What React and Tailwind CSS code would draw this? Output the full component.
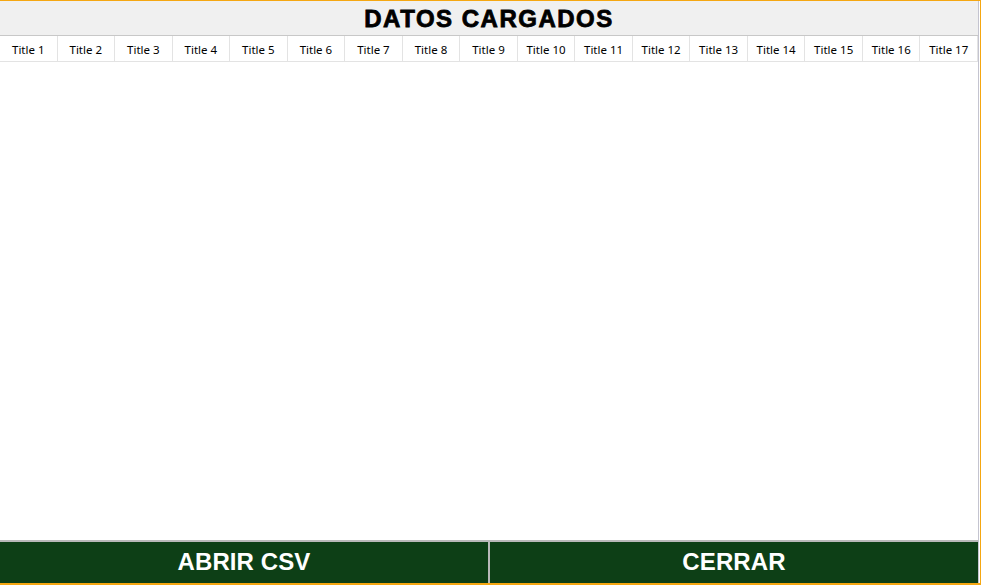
import React from 'react';

const columns = Array.from({ length: 17 }, (_, i) => `Title ${i + 1}`);

const DatosCargados = () => {
  return (
    <div className="w-[981px] h-[585px] flex border-t border-r border-b-2 border-[#f5a712] bg-white font-['Liberation_Sans',Arial,sans-serif]">
      <div className="flex-1 flex flex-col border-r border-[#c4c4d0] mr-px">
        <div className="h-[35px] shrink-0 bg-[#f0f0f0] border-b border-[#c8c8c8] flex items-center justify-center">
          <h1 className="text-[24px] font-bold tracking-[1.5px] text-black [-webkit-text-stroke:0.8px_black] leading-none pt-[2px]">
            DATOS CARGADOS
          </h1>
        </div>

        <div className="grid grid-cols-17 h-[26px] shrink-0 border-b border-[#e3e3e3]">
          {columns.map((title) => (
            <div
              key={title}
              className="flex items-center justify-center pt-[2px] border-r border-[#e3e3e3] text-[11.5px] text-black font-['Noto_Sans',sans-serif]"
            >
              {title}
            </div>
          ))}
        </div>

        <div className="flex-1 bg-white" />

        <div className="h-[43px] shrink-0 flex border-t-2 border-[#b9b9b9] bg-[#b9b9b9] gap-[2px]">
          <button className="flex-1 bg-[#0d3f16] text-white text-[24px] font-bold tracking-[0.1px] pb-[2px]">
            ABRIR CSV
          </button>
          <button className="flex-1 bg-[#0d3f16] text-white text-[24px] font-bold tracking-[0.1px] pb-[2px]">
            CERRAR
          </button>
        </div>
      </div>
    </div>
  );
};

export default function App() {
  return <DatosCargados />;
}
